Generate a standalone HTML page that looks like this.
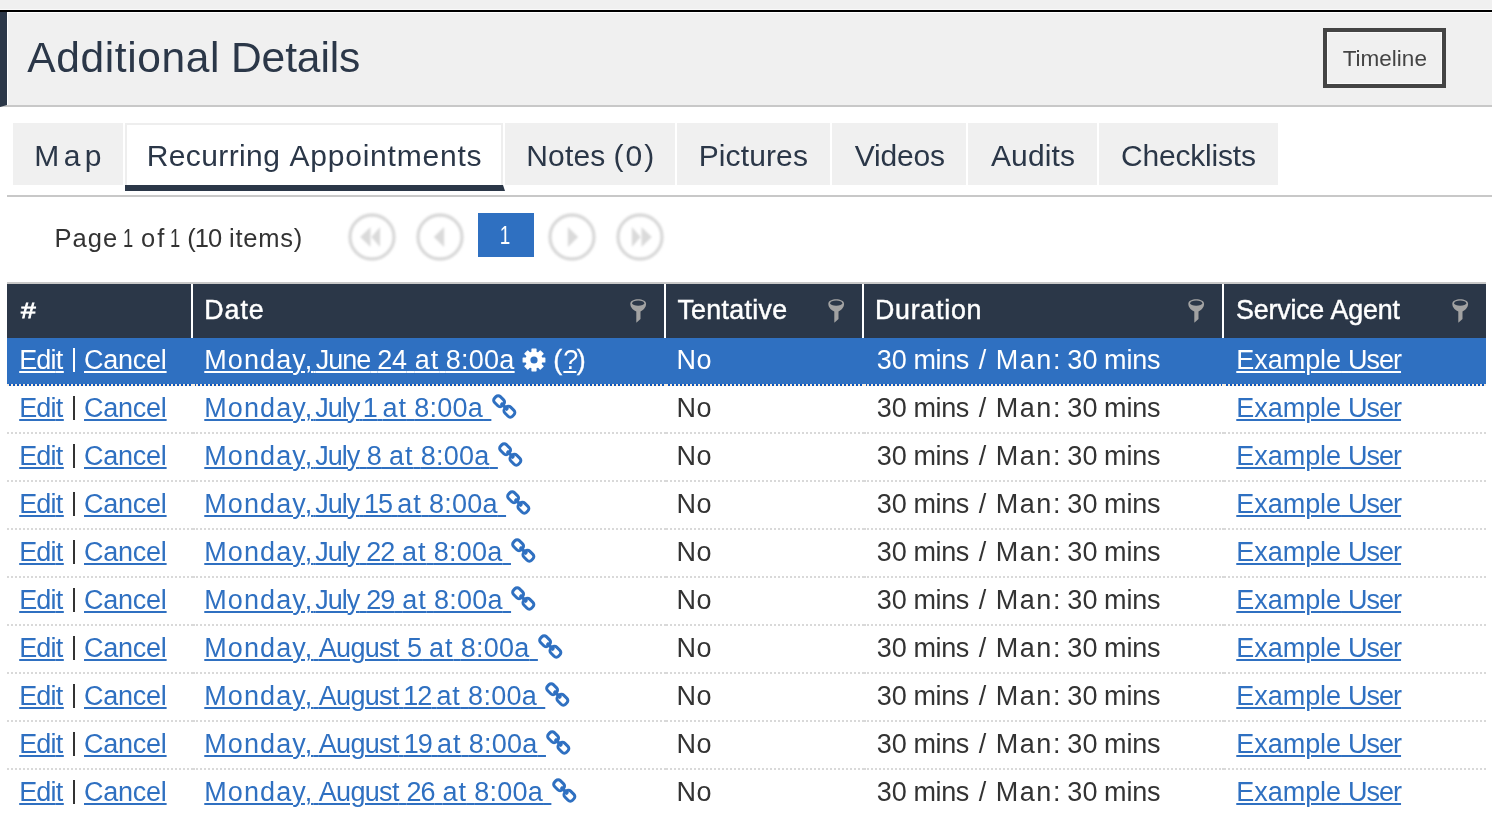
<!DOCTYPE html>
<html><head><meta charset="utf-8"><title>Additional Details</title>
<style>
html,body{margin:0;padding:0;background:#fff;}
body{width:1492px;height:826px;position:relative;overflow:hidden;font-family:"Liberation Sans",sans-serif;}
div,span,a{box-sizing:border-box;}
.abs{position:absolute;}
.u{text-decoration:underline;text-decoration-thickness:2px;text-underline-offset:2px;}
.tab{position:absolute;top:123px;height:62px;background:#f0f0f0;}
.row{position:absolute;left:7px;width:1479px;height:48px;}
.cell{position:absolute;top:0;height:48px;border-bottom:2px dotted #d9d9d9;}
.sep{position:absolute;top:284px;width:2px;height:54px;background:#fff;}
</style></head><body><div id="wrap" style="position:absolute;left:0;top:0;width:1492px;height:826px;will-change:transform;background:#fff">
<div class="abs" style="left:0;top:0;width:1492px;height:10px;background:#f0f0f0"></div>
<div class="abs" style="left:0;top:9px;width:1492px;height:1px;background:#fafafa"></div>
<div class="abs" style="left:0;top:10px;width:1492px;height:2px;background:#000"></div>
<div class="abs" style="left:0;top:12px;width:1492px;height:95px;background:#f0f0f0;border-left:7px solid #2b3748;border-bottom:2px solid #c8c8c8;box-shadow:inset 1px 1px 0 #fff"></div>
<div style="position:absolute;left:27.30px;top:34px;font-size:42.5px;line-height:47px;color:#2b3748;font-weight:normal;white-space:pre;"><span style="letter-spacing:0.615px">Additional</span><span style="letter-spacing:-0.945px"> </span><span style="letter-spacing:-0.093px">Details</span></div>
<div class="abs" style="left:1323px;top:28px;width:123px;height:60px;border:4px solid #444;background:#f0f0f0;box-shadow:inset 0 0 0 1px #fafafa"></div>
<div style="position:absolute;left:1342.65px;top:46px;font-size:22.5px;line-height:25px;letter-spacing:0.011px;color:#444;font-weight:normal;white-space:pre;">Timeline</div>
<div class="tab" style="left:13px;width:110px"></div>
<div style="position:absolute;left:34.16px;top:139px;font-size:30px;line-height:33px;letter-spacing:4.500px;color:#2b3748;font-weight:normal;white-space:pre;">Map</div>
<div class="tab" style="left:677px;width:153px"></div>
<div style="position:absolute;left:698.66px;top:139px;font-size:30px;line-height:33px;letter-spacing:0.130px;color:#2b3748;font-weight:normal;white-space:pre;">Pictures</div>
<div class="tab" style="left:832px;width:134px"></div>
<div style="position:absolute;left:854.80px;top:139px;font-size:30px;line-height:33px;letter-spacing:-0.210px;color:#2b3748;font-weight:normal;white-space:pre;">Videos</div>
<div class="tab" style="left:968px;width:129px"></div>
<div style="position:absolute;left:991.00px;top:139px;font-size:30px;line-height:33px;letter-spacing:0.112px;color:#2b3748;font-weight:normal;white-space:pre;">Audits</div>
<div class="tab" style="left:1099px;width:179px"></div>
<div style="position:absolute;left:1120.99px;top:139px;font-size:30px;line-height:33px;letter-spacing:-0.195px;color:#2b3748;font-weight:normal;white-space:pre;">Checklists</div>
<div class="tab" style="left:505px;width:170px"></div>
<div style="position:absolute;left:526.16px;top:139px;font-size:30px;line-height:33px;color:#2b3748;font-weight:normal;white-space:pre;"><span style="letter-spacing:0.203px">Notes</span><span style="letter-spacing:-0.482px"> </span><span style="letter-spacing:2.047px">(0)</span></div>
<div class="abs" style="left:125px;top:123px;width:378px;height:62px;background:#fff;border:2px solid #eeeeee;border-bottom:0"></div>
<div class="abs" style="left:125px;top:185px;width:380px;height:6px;background:#2b3748;clip-path:polygon(0 0,378px 0,380px 6px,0 6px)"></div>
<div style="position:absolute;left:146.66px;top:139px;font-size:30px;line-height:33px;color:#2b3748;font-weight:normal;white-space:pre;"><span style="letter-spacing:0.397px">Recurring</span><span style="letter-spacing:0.783px"> </span><span style="letter-spacing:0.790px">Appointments</span></div>
<div class="abs" style="left:7px;top:195px;width:1485px;height:2px;background:#c8c8c8"></div>
<div style="position:absolute;left:54.51px;top:224px;font-size:25.5px;line-height:28px;color:#333;font-weight:normal;white-space:pre;"><span style="letter-spacing:1.057px">Page</span><span style="letter-spacing:-4.796px"> </span><span style="display:inline-block;transform:scaleX(0.72);letter-spacing:0.000px">1</span><span style="letter-spacing:-0.942px"> </span><span style="letter-spacing:2.243px">of</span><span style="letter-spacing:-5.962px"> </span><span style="display:inline-block;transform:scaleX(0.72);letter-spacing:0.000px">1</span><span style="letter-spacing:-1.853px"> </span><span style="letter-spacing:-1.000px">(10</span><span style="letter-spacing:0.874px"> </span><span style="letter-spacing:0.740px">items)</span></div>
<svg class="abs" style="left:346px;top:211px;filter:blur(0.8px)" width="52" height="52" viewBox="-26 -26 52 52"><circle cx="0" cy="0" r="22" fill="none" stroke="#d8d8d8" stroke-width="3.3"/><path d="M-11.8 0 L-1.5 -10 L-1.5 10 Z M-0.6 0 L8.1 -10 L8.1 10 Z" fill="#dadada"/></svg>
<svg class="abs" style="left:414px;top:211px;filter:blur(0.8px)" width="52" height="52" viewBox="-26 -26 52 52"><circle cx="0" cy="0" r="22" fill="none" stroke="#d8d8d8" stroke-width="3.3"/><path d="M-6.2 0 L4.1 -10 L4.1 10 Z" fill="#dadada"/></svg>
<svg class="abs" style="left:546px;top:211px;filter:blur(0.8px)" width="52" height="52" viewBox="-26 -26 52 52"><circle cx="0" cy="0" r="22" fill="none" stroke="#d8d8d8" stroke-width="3.3"/><path d="M6.2 0 L-4.1 -10 L-4.1 10 Z" fill="#dadada"/></svg>
<svg class="abs" style="left:614px;top:211px;filter:blur(0.8px)" width="52" height="52" viewBox="-26 -26 52 52"><circle cx="0" cy="0" r="22" fill="none" stroke="#d8d8d8" stroke-width="3.3"/><path d="M11.8 0 L1.5 -10 L1.5 10 Z M0.6 0 L-8.1 -10 L-8.1 10 Z" fill="#dadada"/></svg>
<div class="abs" style="left:478px;top:213px;width:56px;height:44px;background:#2f70c1"></div>
<div style="position:absolute;left:498.01px;top:221px;font-size:25.5px;line-height:28px;letter-spacing:0.000px;color:#fff;font-weight:normal;white-space:pre;transform:scaleX(0.74);">1</div>
<div class="abs" style="left:7px;top:282px;width:1479px;height:2px;background:#c8c8c8"></div>
<div class="abs" style="left:7px;top:284px;width:1479px;height:54px;background:#2b3748"></div>
<div class="sep" style="left:191px"></div>
<div class="sep" style="left:664px"></div>
<div class="sep" style="left:862px"></div>
<div class="sep" style="left:1222px"></div>
<div style="position:absolute;left:20.60px;top:298px;font-size:22px;line-height:25px;letter-spacing:0.000px;color:#fff;font-weight:normal;white-space:pre;-webkit-text-stroke:0.8px #fff;transform:scaleX(1.2);transform-origin:0 0;">#</div>
<div style="position:absolute;left:204.31px;top:295.4px;font-size:26.8px;line-height:30px;letter-spacing:0.957px;color:#fff;font-weight:normal;white-space:pre;-webkit-text-stroke:0.45px #fff;">Date</div>
<div style="position:absolute;left:677.38px;top:295.4px;font-size:26.8px;line-height:30px;letter-spacing:0.305px;color:#fff;font-weight:normal;white-space:pre;-webkit-text-stroke:0.45px #fff;">Tentative</div>
<div style="position:absolute;left:874.91px;top:295.4px;font-size:26.8px;line-height:30px;letter-spacing:0.757px;color:#fff;font-weight:normal;white-space:pre;-webkit-text-stroke:0.45px #fff;">Duration</div>
<div style="position:absolute;left:1236.06px;top:295.4px;font-size:26.8px;line-height:30px;color:#fff;font-weight:normal;white-space:pre;-webkit-text-stroke:0.45px #fff;"><span style="letter-spacing:-0.190px">Service</span><span style="letter-spacing:-0.942px"> </span><span style="letter-spacing:-0.182px">Agent</span></div>
<svg class="abs" style="left:627.7px;top:296px;filter:blur(0.7px)" width="21" height="30" viewBox="-2 -2.7 21 30"><path d="M0.3 5 C0.3 -1.0 16.1 -1.0 16.1 5 C16.1 9.3 12.4 11.8 10.5 12.8 L10.5 20.3 L6.3 24.0 L6.3 12.8 C4.2 11.8 0.3 9.3 0.3 5 Z" fill="#a2a2a2"/><ellipse cx="8.2" cy="4.5" rx="6.0" ry="2.6" fill="#2b3748"/></svg>
<svg class="abs" style="left:825.8px;top:296px;filter:blur(0.7px)" width="21" height="30" viewBox="-2 -2.7 21 30"><path d="M0.3 5 C0.3 -1.0 16.1 -1.0 16.1 5 C16.1 9.3 12.4 11.8 10.5 12.8 L10.5 20.3 L6.3 24.0 L6.3 12.8 C4.2 11.8 0.3 9.3 0.3 5 Z" fill="#a2a2a2"/><ellipse cx="8.2" cy="4.5" rx="6.0" ry="2.6" fill="#2b3748"/></svg>
<svg class="abs" style="left:1185.7px;top:296px;filter:blur(0.7px)" width="21" height="30" viewBox="-2 -2.7 21 30"><path d="M0.3 5 C0.3 -1.0 16.1 -1.0 16.1 5 C16.1 9.3 12.4 11.8 10.5 12.8 L10.5 20.3 L6.3 24.0 L6.3 12.8 C4.2 11.8 0.3 9.3 0.3 5 Z" fill="#a2a2a2"/><ellipse cx="8.2" cy="4.5" rx="6.0" ry="2.6" fill="#2b3748"/></svg>
<svg class="abs" style="left:1449.7px;top:296px;filter:blur(0.7px)" width="21" height="30" viewBox="-2 -2.7 21 30"><path d="M0.3 5 C0.3 -1.0 16.1 -1.0 16.1 5 C16.1 9.3 12.4 11.8 10.5 12.8 L10.5 20.3 L6.3 24.0 L6.3 12.8 C4.2 11.8 0.3 9.3 0.3 5 Z" fill="#a2a2a2"/><ellipse cx="8.2" cy="4.5" rx="6.0" ry="2.6" fill="#2b3748"/></svg>
<div class="row" style="top:338px;background:linear-gradient(#2f70c1 0,#2f70c1 46px,#0d55ba 46px,#0d55ba 48px);"><div class="cell" style="left:0px;width:186px;border-bottom-color:#fcefdf;"></div><div class="cell" style="left:186px;width:473px;border-bottom-color:#fcefdf;"></div><div class="cell" style="left:659px;width:198px;border-bottom-color:#fcefdf;"></div><div class="cell" style="left:857px;width:360px;border-bottom-color:#fcefdf;"></div><div class="cell" style="left:1217px;width:262px;border-bottom-color:#fcefdf;"></div></div>
<div class="u" style="position:absolute;left:19.19px;top:345px;font-size:27px;line-height:30px;letter-spacing:-0.836px;color:#fff;font-weight:normal;white-space:pre;">Edi<span style="letter-spacing:0.6px">t</span></div>
<div class="abs" style="left:73.15px;top:347.6px;width:1.9px;height:24.6px;background:#fff"></div>
<div class="u" style="position:absolute;left:84.03px;top:345px;font-size:27px;line-height:30px;letter-spacing:-0.240px;color:#fff;font-weight:normal;white-space:pre;">Cancel</div>
<div class="u" style="position:absolute;left:204.29px;top:345px;font-size:27px;line-height:30px;color:#fff;font-weight:normal;white-space:pre;"><span style="letter-spacing:1.079px">Monday,</span><span style="letter-spacing:-5.185px"> </span><span style="letter-spacing:-1.000px">June</span><span style="letter-spacing:-0.427px"> </span><span style="letter-spacing:-0.494px">24</span><span style="letter-spacing:0.877px"> </span><span style="letter-spacing:0.934px">at</span><span style="letter-spacing:-0.887px"> </span><span style="letter-spacing:0.252px">8:00a</span></div>
<svg class="abs" style="left:521.3px;top:346.7px" width="26" height="26" viewBox="-13 -13 26 26"><path d="M-2.00 -7.75 L-2.00 -10.82 L2.00 -10.82 L2.00 -7.75 L4.06 -6.89 L6.23 -9.07 L9.07 -6.23 L6.89 -4.06 L7.75 -2.00 L10.82 -2.00 L10.82 2.00 L7.75 2.00 L6.89 4.06 L9.07 6.23 L6.23 9.07 L4.06 6.89 L2.00 7.75 L2.00 10.82 L-2.00 10.82 L-2.00 7.75 L-4.06 6.89 L-6.23 9.07 L-9.07 6.23 L-6.89 4.06 L-7.75 2.00 L-10.82 2.00 L-10.82 -2.00 L-7.75 -2.00 L-6.89 -4.06 L-9.07 -6.23 L-6.23 -9.07 L-4.06 -6.89 Z" fill="#fff" stroke="#fff" stroke-width="1.2" stroke-linejoin="round"/><circle r="3.6" fill="#2f70c1"/></svg>
<div style="position:absolute;left:553.33px;top:345px;font-size:27px;line-height:30px;letter-spacing:0.000px;color:#fff;font-weight:normal;white-space:pre;-webkit-text-stroke:0.35px #fff;">(</div>
<div class="u" style="position:absolute;left:563.36px;top:345px;font-size:27px;line-height:30px;letter-spacing:0.000px;color:#fff;font-weight:normal;white-space:pre;letter-spacing:-2px;">?</div>
<div style="position:absolute;left:576.80px;top:345px;font-size:27px;line-height:30px;letter-spacing:0.000px;color:#fff;font-weight:normal;white-space:pre;-webkit-text-stroke:0.35px #fff;">)</div>
<div style="position:absolute;left:676.39px;top:345px;font-size:27px;line-height:30px;letter-spacing:0.589px;color:#fff;font-weight:normal;white-space:pre;">No</div>
<div style="position:absolute;left:876.76px;top:345px;font-size:27px;line-height:30px;color:#fff;font-weight:normal;white-space:pre;"><span style="letter-spacing:0.084px">30</span><span style="letter-spacing:-0.945px"> </span><span style="letter-spacing:-0.392px">mins</span><span style="letter-spacing:2.349px"> </span><span style="letter-spacing:0.000px">/</span><span style="letter-spacing:1.785px"> </span><span style="letter-spacing:1.608px">Man:</span><span style="letter-spacing:-2.392px"> </span><span style="letter-spacing:0.284px">30</span><span style="letter-spacing:-1.245px"> </span><span style="letter-spacing:-0.192px">mins</span></div>
<div class="u" style="position:absolute;left:1236.29px;top:345px;font-size:27px;line-height:30px;color:#fff;font-weight:normal;white-space:pre;"><span style="letter-spacing:-0.041px">Example</span><span style="letter-spacing:-0.536px"> </span><span style="letter-spacing:-1.000px">User</span></div>
<div class="row" style="top:386px;"><div class="cell" style="left:0px;width:186px;"></div><div class="cell" style="left:186px;width:473px;"></div><div class="cell" style="left:659px;width:198px;"></div><div class="cell" style="left:857px;width:360px;"></div><div class="cell" style="left:1217px;width:262px;"></div></div>
<div class="u" style="position:absolute;left:19.19px;top:393px;font-size:27px;line-height:30px;letter-spacing:-0.836px;color:#2f70c1;font-weight:normal;white-space:pre;">Edi<span style="letter-spacing:0.6px">t</span></div>
<div class="abs" style="left:73.15px;top:395.6px;width:1.9px;height:24.6px;background:#333"></div>
<div class="u" style="position:absolute;left:84.03px;top:393px;font-size:27px;line-height:30px;letter-spacing:-0.240px;color:#2f70c1;font-weight:normal;white-space:pre;">Cancel</div>
<div class="u" style="position:absolute;left:204.29px;top:393px;font-size:27px;line-height:30px;color:#2f70c1;font-weight:normal;white-space:pre;"><span style="letter-spacing:1.079px">Monday,</span><span style="letter-spacing:-5.666px"> </span><span style="letter-spacing:-1.000px">July</span><span style="letter-spacing:-4.053px"> </span><span style="letter-spacing:0.000px">1</span><span style="letter-spacing:-2.757px"> </span><span style="letter-spacing:0.934px">at</span><span style="letter-spacing:-0.187px"> </span><span style="letter-spacing:0.252px">8:00a</span><span style="letter-spacing:0.818px"> </span></div>
<svg class="abs" style="left:491.6px;top:394px" width="27" height="27" viewBox="0 0 27 27"><g fill="none" stroke="#2f70c1" stroke-width="3"><rect x="-5.4" y="-4.1" width="10.8" height="8.2" rx="3.1" transform="translate(7.1 7.2) rotate(45)"/><rect x="-5.4" y="-4.1" width="10.8" height="8.2" rx="3.1" transform="translate(17.4 17.7) rotate(45)"/><path d="M8.9 9.0 L15.9 16.0" stroke-width="3.2"/></g></svg>
<div style="position:absolute;left:676.39px;top:393px;font-size:27px;line-height:30px;letter-spacing:0.589px;color:#333;font-weight:normal;white-space:pre;">No</div>
<div style="position:absolute;left:876.76px;top:393px;font-size:27px;line-height:30px;color:#333;font-weight:normal;white-space:pre;"><span style="letter-spacing:0.084px">30</span><span style="letter-spacing:-0.945px"> </span><span style="letter-spacing:-0.392px">mins</span><span style="letter-spacing:2.349px"> </span><span style="letter-spacing:0.000px">/</span><span style="letter-spacing:1.785px"> </span><span style="letter-spacing:1.608px">Man:</span><span style="letter-spacing:-2.392px"> </span><span style="letter-spacing:0.284px">30</span><span style="letter-spacing:-1.245px"> </span><span style="letter-spacing:-0.192px">mins</span></div>
<div class="u" style="position:absolute;left:1236.29px;top:393px;font-size:27px;line-height:30px;color:#2f70c1;font-weight:normal;white-space:pre;"><span style="letter-spacing:-0.041px">Example</span><span style="letter-spacing:-0.536px"> </span><span style="letter-spacing:-1.000px">User</span></div>
<div class="row" style="top:434px;"><div class="cell" style="left:0px;width:186px;"></div><div class="cell" style="left:186px;width:473px;"></div><div class="cell" style="left:659px;width:198px;"></div><div class="cell" style="left:857px;width:360px;"></div><div class="cell" style="left:1217px;width:262px;"></div></div>
<div class="u" style="position:absolute;left:19.19px;top:441px;font-size:27px;line-height:30px;letter-spacing:-0.836px;color:#2f70c1;font-weight:normal;white-space:pre;">Edi<span style="letter-spacing:0.6px">t</span></div>
<div class="abs" style="left:73.15px;top:443.6px;width:1.9px;height:24.6px;background:#333"></div>
<div class="u" style="position:absolute;left:84.03px;top:441px;font-size:27px;line-height:30px;letter-spacing:-0.240px;color:#2f70c1;font-weight:normal;white-space:pre;">Cancel</div>
<div class="u" style="position:absolute;left:204.29px;top:441px;font-size:27px;line-height:30px;color:#2f70c1;font-weight:normal;white-space:pre;"><span style="letter-spacing:1.079px">Monday,</span><span style="letter-spacing:-5.666px"> </span><span style="letter-spacing:-1.000px">July</span><span style="letter-spacing:0.069px"> </span><span style="letter-spacing:0.000px">8</span><span style="letter-spacing:-0.379px"> </span><span style="letter-spacing:0.934px">at</span><span style="letter-spacing:-0.187px"> </span><span style="letter-spacing:0.252px">8:00a</span><span style="letter-spacing:0.818px"> </span></div>
<svg class="abs" style="left:498.0px;top:442px" width="27" height="27" viewBox="0 0 27 27"><g fill="none" stroke="#2f70c1" stroke-width="3"><rect x="-5.4" y="-4.1" width="10.8" height="8.2" rx="3.1" transform="translate(7.1 7.2) rotate(45)"/><rect x="-5.4" y="-4.1" width="10.8" height="8.2" rx="3.1" transform="translate(17.4 17.7) rotate(45)"/><path d="M8.9 9.0 L15.9 16.0" stroke-width="3.2"/></g></svg>
<div style="position:absolute;left:676.39px;top:441px;font-size:27px;line-height:30px;letter-spacing:0.589px;color:#333;font-weight:normal;white-space:pre;">No</div>
<div style="position:absolute;left:876.76px;top:441px;font-size:27px;line-height:30px;color:#333;font-weight:normal;white-space:pre;"><span style="letter-spacing:0.084px">30</span><span style="letter-spacing:-0.945px"> </span><span style="letter-spacing:-0.392px">mins</span><span style="letter-spacing:2.349px"> </span><span style="letter-spacing:0.000px">/</span><span style="letter-spacing:1.785px"> </span><span style="letter-spacing:1.608px">Man:</span><span style="letter-spacing:-2.392px"> </span><span style="letter-spacing:0.284px">30</span><span style="letter-spacing:-1.245px"> </span><span style="letter-spacing:-0.192px">mins</span></div>
<div class="u" style="position:absolute;left:1236.29px;top:441px;font-size:27px;line-height:30px;color:#2f70c1;font-weight:normal;white-space:pre;"><span style="letter-spacing:-0.041px">Example</span><span style="letter-spacing:-0.536px"> </span><span style="letter-spacing:-1.000px">User</span></div>
<div class="row" style="top:482px;"><div class="cell" style="left:0px;width:186px;"></div><div class="cell" style="left:186px;width:473px;"></div><div class="cell" style="left:659px;width:198px;"></div><div class="cell" style="left:857px;width:360px;"></div><div class="cell" style="left:1217px;width:262px;"></div></div>
<div class="u" style="position:absolute;left:19.19px;top:489px;font-size:27px;line-height:30px;letter-spacing:-0.836px;color:#2f70c1;font-weight:normal;white-space:pre;">Edi<span style="letter-spacing:0.6px">t</span></div>
<div class="abs" style="left:73.15px;top:491.6px;width:1.9px;height:24.6px;background:#333"></div>
<div class="u" style="position:absolute;left:84.03px;top:489px;font-size:27px;line-height:30px;letter-spacing:-0.240px;color:#2f70c1;font-weight:normal;white-space:pre;">Cancel</div>
<div class="u" style="position:absolute;left:204.29px;top:489px;font-size:27px;line-height:30px;color:#2f70c1;font-weight:normal;white-space:pre;"><span style="letter-spacing:1.079px">Monday,</span><span style="letter-spacing:-5.666px"> </span><span style="letter-spacing:-1.000px">July</span><span style="letter-spacing:-2.861px"> </span><span style="letter-spacing:-1.000px">15</span><span style="letter-spacing:-2.265px"> </span><span style="letter-spacing:0.934px">at</span><span style="letter-spacing:-0.187px"> </span><span style="letter-spacing:0.252px">8:00a</span><span style="letter-spacing:0.818px"> </span></div>
<svg class="abs" style="left:506.4px;top:490px" width="27" height="27" viewBox="0 0 27 27"><g fill="none" stroke="#2f70c1" stroke-width="3"><rect x="-5.4" y="-4.1" width="10.8" height="8.2" rx="3.1" transform="translate(7.1 7.2) rotate(45)"/><rect x="-5.4" y="-4.1" width="10.8" height="8.2" rx="3.1" transform="translate(17.4 17.7) rotate(45)"/><path d="M8.9 9.0 L15.9 16.0" stroke-width="3.2"/></g></svg>
<div style="position:absolute;left:676.39px;top:489px;font-size:27px;line-height:30px;letter-spacing:0.589px;color:#333;font-weight:normal;white-space:pre;">No</div>
<div style="position:absolute;left:876.76px;top:489px;font-size:27px;line-height:30px;color:#333;font-weight:normal;white-space:pre;"><span style="letter-spacing:0.084px">30</span><span style="letter-spacing:-0.945px"> </span><span style="letter-spacing:-0.392px">mins</span><span style="letter-spacing:2.349px"> </span><span style="letter-spacing:0.000px">/</span><span style="letter-spacing:1.785px"> </span><span style="letter-spacing:1.608px">Man:</span><span style="letter-spacing:-2.392px"> </span><span style="letter-spacing:0.284px">30</span><span style="letter-spacing:-1.245px"> </span><span style="letter-spacing:-0.192px">mins</span></div>
<div class="u" style="position:absolute;left:1236.29px;top:489px;font-size:27px;line-height:30px;color:#2f70c1;font-weight:normal;white-space:pre;"><span style="letter-spacing:-0.041px">Example</span><span style="letter-spacing:-0.536px"> </span><span style="letter-spacing:-1.000px">User</span></div>
<div class="row" style="top:530px;"><div class="cell" style="left:0px;width:186px;"></div><div class="cell" style="left:186px;width:473px;"></div><div class="cell" style="left:659px;width:198px;"></div><div class="cell" style="left:857px;width:360px;"></div><div class="cell" style="left:1217px;width:262px;"></div></div>
<div class="u" style="position:absolute;left:19.19px;top:537px;font-size:27px;line-height:30px;letter-spacing:-0.836px;color:#2f70c1;font-weight:normal;white-space:pre;">Edi<span style="letter-spacing:0.6px">t</span></div>
<div class="abs" style="left:73.15px;top:539.6px;width:1.9px;height:24.6px;background:#333"></div>
<div class="u" style="position:absolute;left:84.03px;top:537px;font-size:27px;line-height:30px;letter-spacing:-0.240px;color:#2f70c1;font-weight:normal;white-space:pre;">Cancel</div>
<div class="u" style="position:absolute;left:204.29px;top:537px;font-size:27px;line-height:30px;color:#2f70c1;font-weight:normal;white-space:pre;"><span style="letter-spacing:1.079px">Monday,</span><span style="letter-spacing:-5.666px"> </span><span style="letter-spacing:-1.000px">July</span><span style="letter-spacing:-0.600px"> </span><span style="letter-spacing:-1.000px">22</span><span style="letter-spacing:0.374px"> </span><span style="letter-spacing:0.934px">at</span><span style="letter-spacing:-0.187px"> </span><span style="letter-spacing:0.252px">8:00a</span><span style="letter-spacing:0.818px"> </span></div>
<svg class="abs" style="left:510.7px;top:538px" width="27" height="27" viewBox="0 0 27 27"><g fill="none" stroke="#2f70c1" stroke-width="3"><rect x="-5.4" y="-4.1" width="10.8" height="8.2" rx="3.1" transform="translate(7.1 7.2) rotate(45)"/><rect x="-5.4" y="-4.1" width="10.8" height="8.2" rx="3.1" transform="translate(17.4 17.7) rotate(45)"/><path d="M8.9 9.0 L15.9 16.0" stroke-width="3.2"/></g></svg>
<div style="position:absolute;left:676.39px;top:537px;font-size:27px;line-height:30px;letter-spacing:0.589px;color:#333;font-weight:normal;white-space:pre;">No</div>
<div style="position:absolute;left:876.76px;top:537px;font-size:27px;line-height:30px;color:#333;font-weight:normal;white-space:pre;"><span style="letter-spacing:0.084px">30</span><span style="letter-spacing:-0.945px"> </span><span style="letter-spacing:-0.392px">mins</span><span style="letter-spacing:2.349px"> </span><span style="letter-spacing:0.000px">/</span><span style="letter-spacing:1.785px"> </span><span style="letter-spacing:1.608px">Man:</span><span style="letter-spacing:-2.392px"> </span><span style="letter-spacing:0.284px">30</span><span style="letter-spacing:-1.245px"> </span><span style="letter-spacing:-0.192px">mins</span></div>
<div class="u" style="position:absolute;left:1236.29px;top:537px;font-size:27px;line-height:30px;color:#2f70c1;font-weight:normal;white-space:pre;"><span style="letter-spacing:-0.041px">Example</span><span style="letter-spacing:-0.536px"> </span><span style="letter-spacing:-1.000px">User</span></div>
<div class="row" style="top:578px;"><div class="cell" style="left:0px;width:186px;"></div><div class="cell" style="left:186px;width:473px;"></div><div class="cell" style="left:659px;width:198px;"></div><div class="cell" style="left:857px;width:360px;"></div><div class="cell" style="left:1217px;width:262px;"></div></div>
<div class="u" style="position:absolute;left:19.19px;top:585px;font-size:27px;line-height:30px;letter-spacing:-0.836px;color:#2f70c1;font-weight:normal;white-space:pre;">Edi<span style="letter-spacing:0.6px">t</span></div>
<div class="abs" style="left:73.15px;top:587.6px;width:1.9px;height:24.6px;background:#333"></div>
<div class="u" style="position:absolute;left:84.03px;top:585px;font-size:27px;line-height:30px;letter-spacing:-0.240px;color:#2f70c1;font-weight:normal;white-space:pre;">Cancel</div>
<div class="u" style="position:absolute;left:204.29px;top:585px;font-size:27px;line-height:30px;color:#2f70c1;font-weight:normal;white-space:pre;"><span style="letter-spacing:1.079px">Monday,</span><span style="letter-spacing:-5.666px"> </span><span style="letter-spacing:-1.000px">July</span><span style="letter-spacing:-0.550px"> </span><span style="letter-spacing:-1.000px">29</span><span style="letter-spacing:0.424px"> </span><span style="letter-spacing:0.934px">at</span><span style="letter-spacing:-0.187px"> </span><span style="letter-spacing:0.252px">8:00a</span><span style="letter-spacing:0.818px"> </span></div>
<svg class="abs" style="left:511.4px;top:586px" width="27" height="27" viewBox="0 0 27 27"><g fill="none" stroke="#2f70c1" stroke-width="3"><rect x="-5.4" y="-4.1" width="10.8" height="8.2" rx="3.1" transform="translate(7.1 7.2) rotate(45)"/><rect x="-5.4" y="-4.1" width="10.8" height="8.2" rx="3.1" transform="translate(17.4 17.7) rotate(45)"/><path d="M8.9 9.0 L15.9 16.0" stroke-width="3.2"/></g></svg>
<div style="position:absolute;left:676.39px;top:585px;font-size:27px;line-height:30px;letter-spacing:0.589px;color:#333;font-weight:normal;white-space:pre;">No</div>
<div style="position:absolute;left:876.76px;top:585px;font-size:27px;line-height:30px;color:#333;font-weight:normal;white-space:pre;"><span style="letter-spacing:0.084px">30</span><span style="letter-spacing:-0.945px"> </span><span style="letter-spacing:-0.392px">mins</span><span style="letter-spacing:2.349px"> </span><span style="letter-spacing:0.000px">/</span><span style="letter-spacing:1.785px"> </span><span style="letter-spacing:1.608px">Man:</span><span style="letter-spacing:-2.392px"> </span><span style="letter-spacing:0.284px">30</span><span style="letter-spacing:-1.245px"> </span><span style="letter-spacing:-0.192px">mins</span></div>
<div class="u" style="position:absolute;left:1236.29px;top:585px;font-size:27px;line-height:30px;color:#2f70c1;font-weight:normal;white-space:pre;"><span style="letter-spacing:-0.041px">Example</span><span style="letter-spacing:-0.536px"> </span><span style="letter-spacing:-1.000px">User</span></div>
<div class="row" style="top:626px;"><div class="cell" style="left:0px;width:186px;"></div><div class="cell" style="left:186px;width:473px;"></div><div class="cell" style="left:659px;width:198px;"></div><div class="cell" style="left:857px;width:360px;"></div><div class="cell" style="left:1217px;width:262px;"></div></div>
<div class="u" style="position:absolute;left:19.19px;top:633px;font-size:27px;line-height:30px;letter-spacing:-0.836px;color:#2f70c1;font-weight:normal;white-space:pre;">Edi<span style="letter-spacing:0.6px">t</span></div>
<div class="abs" style="left:73.15px;top:635.6px;width:1.9px;height:24.6px;background:#333"></div>
<div class="u" style="position:absolute;left:84.03px;top:633px;font-size:27px;line-height:30px;letter-spacing:-0.240px;color:#2f70c1;font-weight:normal;white-space:pre;">Cancel</div>
<div class="u" style="position:absolute;left:204.29px;top:633px;font-size:27px;line-height:30px;color:#2f70c1;font-weight:normal;white-space:pre;"><span style="letter-spacing:1.079px">Monday,</span><span style="letter-spacing:-2.097px"> </span><span style="letter-spacing:-0.690px">August</span><span style="letter-spacing:0.798px"> </span><span style="letter-spacing:0.000px">5</span><span style="letter-spacing:-0.579px"> </span><span style="letter-spacing:0.934px">at</span><span style="letter-spacing:-0.187px"> </span><span style="letter-spacing:0.252px">8:00a</span><span style="letter-spacing:0.818px"> </span></div>
<svg class="abs" style="left:537.5px;top:634px" width="27" height="27" viewBox="0 0 27 27"><g fill="none" stroke="#2f70c1" stroke-width="3"><rect x="-5.4" y="-4.1" width="10.8" height="8.2" rx="3.1" transform="translate(7.1 7.2) rotate(45)"/><rect x="-5.4" y="-4.1" width="10.8" height="8.2" rx="3.1" transform="translate(17.4 17.7) rotate(45)"/><path d="M8.9 9.0 L15.9 16.0" stroke-width="3.2"/></g></svg>
<div style="position:absolute;left:676.39px;top:633px;font-size:27px;line-height:30px;letter-spacing:0.589px;color:#333;font-weight:normal;white-space:pre;">No</div>
<div style="position:absolute;left:876.76px;top:633px;font-size:27px;line-height:30px;color:#333;font-weight:normal;white-space:pre;"><span style="letter-spacing:0.084px">30</span><span style="letter-spacing:-0.945px"> </span><span style="letter-spacing:-0.392px">mins</span><span style="letter-spacing:2.349px"> </span><span style="letter-spacing:0.000px">/</span><span style="letter-spacing:1.785px"> </span><span style="letter-spacing:1.608px">Man:</span><span style="letter-spacing:-2.392px"> </span><span style="letter-spacing:0.284px">30</span><span style="letter-spacing:-1.245px"> </span><span style="letter-spacing:-0.192px">mins</span></div>
<div class="u" style="position:absolute;left:1236.29px;top:633px;font-size:27px;line-height:30px;color:#2f70c1;font-weight:normal;white-space:pre;"><span style="letter-spacing:-0.041px">Example</span><span style="letter-spacing:-0.536px"> </span><span style="letter-spacing:-1.000px">User</span></div>
<div class="row" style="top:674px;"><div class="cell" style="left:0px;width:186px;"></div><div class="cell" style="left:186px;width:473px;"></div><div class="cell" style="left:659px;width:198px;"></div><div class="cell" style="left:857px;width:360px;"></div><div class="cell" style="left:1217px;width:262px;"></div></div>
<div class="u" style="position:absolute;left:19.19px;top:681px;font-size:27px;line-height:30px;letter-spacing:-0.836px;color:#2f70c1;font-weight:normal;white-space:pre;">Edi<span style="letter-spacing:0.6px">t</span></div>
<div class="abs" style="left:73.15px;top:683.6px;width:1.9px;height:24.6px;background:#333"></div>
<div class="u" style="position:absolute;left:84.03px;top:681px;font-size:27px;line-height:30px;letter-spacing:-0.240px;color:#2f70c1;font-weight:normal;white-space:pre;">Cancel</div>
<div class="u" style="position:absolute;left:204.29px;top:681px;font-size:27px;line-height:30px;color:#2f70c1;font-weight:normal;white-space:pre;"><span style="letter-spacing:1.079px">Monday,</span><span style="letter-spacing:-2.097px"> </span><span style="letter-spacing:-0.690px">August</span><span style="letter-spacing:-2.932px"> </span><span style="letter-spacing:-1.000px">12</span><span style="letter-spacing:-2.465px"> </span><span style="letter-spacing:0.934px">at</span><span style="letter-spacing:-0.187px"> </span><span style="letter-spacing:0.252px">8:00a</span><span style="letter-spacing:0.818px"> </span></div>
<svg class="abs" style="left:545.2px;top:682px" width="27" height="27" viewBox="0 0 27 27"><g fill="none" stroke="#2f70c1" stroke-width="3"><rect x="-5.4" y="-4.1" width="10.8" height="8.2" rx="3.1" transform="translate(7.1 7.2) rotate(45)"/><rect x="-5.4" y="-4.1" width="10.8" height="8.2" rx="3.1" transform="translate(17.4 17.7) rotate(45)"/><path d="M8.9 9.0 L15.9 16.0" stroke-width="3.2"/></g></svg>
<div style="position:absolute;left:676.39px;top:681px;font-size:27px;line-height:30px;letter-spacing:0.589px;color:#333;font-weight:normal;white-space:pre;">No</div>
<div style="position:absolute;left:876.76px;top:681px;font-size:27px;line-height:30px;color:#333;font-weight:normal;white-space:pre;"><span style="letter-spacing:0.084px">30</span><span style="letter-spacing:-0.945px"> </span><span style="letter-spacing:-0.392px">mins</span><span style="letter-spacing:2.349px"> </span><span style="letter-spacing:0.000px">/</span><span style="letter-spacing:1.785px"> </span><span style="letter-spacing:1.608px">Man:</span><span style="letter-spacing:-2.392px"> </span><span style="letter-spacing:0.284px">30</span><span style="letter-spacing:-1.245px"> </span><span style="letter-spacing:-0.192px">mins</span></div>
<div class="u" style="position:absolute;left:1236.29px;top:681px;font-size:27px;line-height:30px;color:#2f70c1;font-weight:normal;white-space:pre;"><span style="letter-spacing:-0.041px">Example</span><span style="letter-spacing:-0.536px"> </span><span style="letter-spacing:-1.000px">User</span></div>
<div class="row" style="top:722px;"><div class="cell" style="left:0px;width:186px;"></div><div class="cell" style="left:186px;width:473px;"></div><div class="cell" style="left:659px;width:198px;"></div><div class="cell" style="left:857px;width:360px;"></div><div class="cell" style="left:1217px;width:262px;"></div></div>
<div class="u" style="position:absolute;left:19.19px;top:729px;font-size:27px;line-height:30px;letter-spacing:-0.836px;color:#2f70c1;font-weight:normal;white-space:pre;">Edi<span style="letter-spacing:0.6px">t</span></div>
<div class="abs" style="left:73.15px;top:731.6px;width:1.9px;height:24.6px;background:#333"></div>
<div class="u" style="position:absolute;left:84.03px;top:729px;font-size:27px;line-height:30px;letter-spacing:-0.240px;color:#2f70c1;font-weight:normal;white-space:pre;">Cancel</div>
<div class="u" style="position:absolute;left:204.29px;top:729px;font-size:27px;line-height:30px;color:#2f70c1;font-weight:normal;white-space:pre;"><span style="letter-spacing:1.079px">Monday,</span><span style="letter-spacing:-2.097px"> </span><span style="letter-spacing:-0.690px">August</span><span style="letter-spacing:-2.582px"> </span><span style="letter-spacing:-1.000px">19</span><span style="letter-spacing:-2.115px"> </span><span style="letter-spacing:0.934px">at</span><span style="letter-spacing:-0.187px"> </span><span style="letter-spacing:0.252px">8:00a</span><span style="letter-spacing:0.818px"> </span></div>
<svg class="abs" style="left:545.9px;top:730px" width="27" height="27" viewBox="0 0 27 27"><g fill="none" stroke="#2f70c1" stroke-width="3"><rect x="-5.4" y="-4.1" width="10.8" height="8.2" rx="3.1" transform="translate(7.1 7.2) rotate(45)"/><rect x="-5.4" y="-4.1" width="10.8" height="8.2" rx="3.1" transform="translate(17.4 17.7) rotate(45)"/><path d="M8.9 9.0 L15.9 16.0" stroke-width="3.2"/></g></svg>
<div style="position:absolute;left:676.39px;top:729px;font-size:27px;line-height:30px;letter-spacing:0.589px;color:#333;font-weight:normal;white-space:pre;">No</div>
<div style="position:absolute;left:876.76px;top:729px;font-size:27px;line-height:30px;color:#333;font-weight:normal;white-space:pre;"><span style="letter-spacing:0.084px">30</span><span style="letter-spacing:-0.945px"> </span><span style="letter-spacing:-0.392px">mins</span><span style="letter-spacing:2.349px"> </span><span style="letter-spacing:0.000px">/</span><span style="letter-spacing:1.785px"> </span><span style="letter-spacing:1.608px">Man:</span><span style="letter-spacing:-2.392px"> </span><span style="letter-spacing:0.284px">30</span><span style="letter-spacing:-1.245px"> </span><span style="letter-spacing:-0.192px">mins</span></div>
<div class="u" style="position:absolute;left:1236.29px;top:729px;font-size:27px;line-height:30px;color:#2f70c1;font-weight:normal;white-space:pre;"><span style="letter-spacing:-0.041px">Example</span><span style="letter-spacing:-0.536px"> </span><span style="letter-spacing:-1.000px">User</span></div>
<div class="row" style="top:770px;"><div class="cell" style="left:0px;width:186px;border-bottom:0;"></div><div class="cell" style="left:186px;width:473px;border-bottom:0;"></div><div class="cell" style="left:659px;width:198px;border-bottom:0;"></div><div class="cell" style="left:857px;width:360px;border-bottom:0;"></div><div class="cell" style="left:1217px;width:262px;border-bottom:0;"></div></div>
<div class="u" style="position:absolute;left:19.19px;top:777px;font-size:27px;line-height:30px;letter-spacing:-0.836px;color:#2f70c1;font-weight:normal;white-space:pre;">Edi<span style="letter-spacing:0.6px">t</span></div>
<div class="abs" style="left:73.15px;top:779.6px;width:1.9px;height:24.6px;background:#333"></div>
<div class="u" style="position:absolute;left:84.03px;top:777px;font-size:27px;line-height:30px;letter-spacing:-0.240px;color:#2f70c1;font-weight:normal;white-space:pre;">Cancel</div>
<div class="u" style="position:absolute;left:204.29px;top:777px;font-size:27px;line-height:30px;color:#2f70c1;font-weight:normal;white-space:pre;"><span style="letter-spacing:1.079px">Monday,</span><span style="letter-spacing:-2.097px"> </span><span style="letter-spacing:-0.690px">August</span><span style="letter-spacing:0.329px"> </span><span style="letter-spacing:-1.000px">26</span><span style="letter-spacing:0.374px"> </span><span style="letter-spacing:0.934px">at</span><span style="letter-spacing:-0.187px"> </span><span style="letter-spacing:0.252px">8:00a</span><span style="letter-spacing:0.818px"> </span></div>
<svg class="abs" style="left:551.6px;top:778px" width="27" height="27" viewBox="0 0 27 27"><g fill="none" stroke="#2f70c1" stroke-width="3"><rect x="-5.4" y="-4.1" width="10.8" height="8.2" rx="3.1" transform="translate(7.1 7.2) rotate(45)"/><rect x="-5.4" y="-4.1" width="10.8" height="8.2" rx="3.1" transform="translate(17.4 17.7) rotate(45)"/><path d="M8.9 9.0 L15.9 16.0" stroke-width="3.2"/></g></svg>
<div style="position:absolute;left:676.39px;top:777px;font-size:27px;line-height:30px;letter-spacing:0.589px;color:#333;font-weight:normal;white-space:pre;">No</div>
<div style="position:absolute;left:876.76px;top:777px;font-size:27px;line-height:30px;color:#333;font-weight:normal;white-space:pre;"><span style="letter-spacing:0.084px">30</span><span style="letter-spacing:-0.945px"> </span><span style="letter-spacing:-0.392px">mins</span><span style="letter-spacing:2.349px"> </span><span style="letter-spacing:0.000px">/</span><span style="letter-spacing:1.785px"> </span><span style="letter-spacing:1.608px">Man:</span><span style="letter-spacing:-2.392px"> </span><span style="letter-spacing:0.284px">30</span><span style="letter-spacing:-1.245px"> </span><span style="letter-spacing:-0.192px">mins</span></div>
<div class="u" style="position:absolute;left:1236.29px;top:777px;font-size:27px;line-height:30px;color:#2f70c1;font-weight:normal;white-space:pre;"><span style="letter-spacing:-0.041px">Example</span><span style="letter-spacing:-0.536px"> </span><span style="letter-spacing:-1.000px">User</span></div>
</div></body></html>
